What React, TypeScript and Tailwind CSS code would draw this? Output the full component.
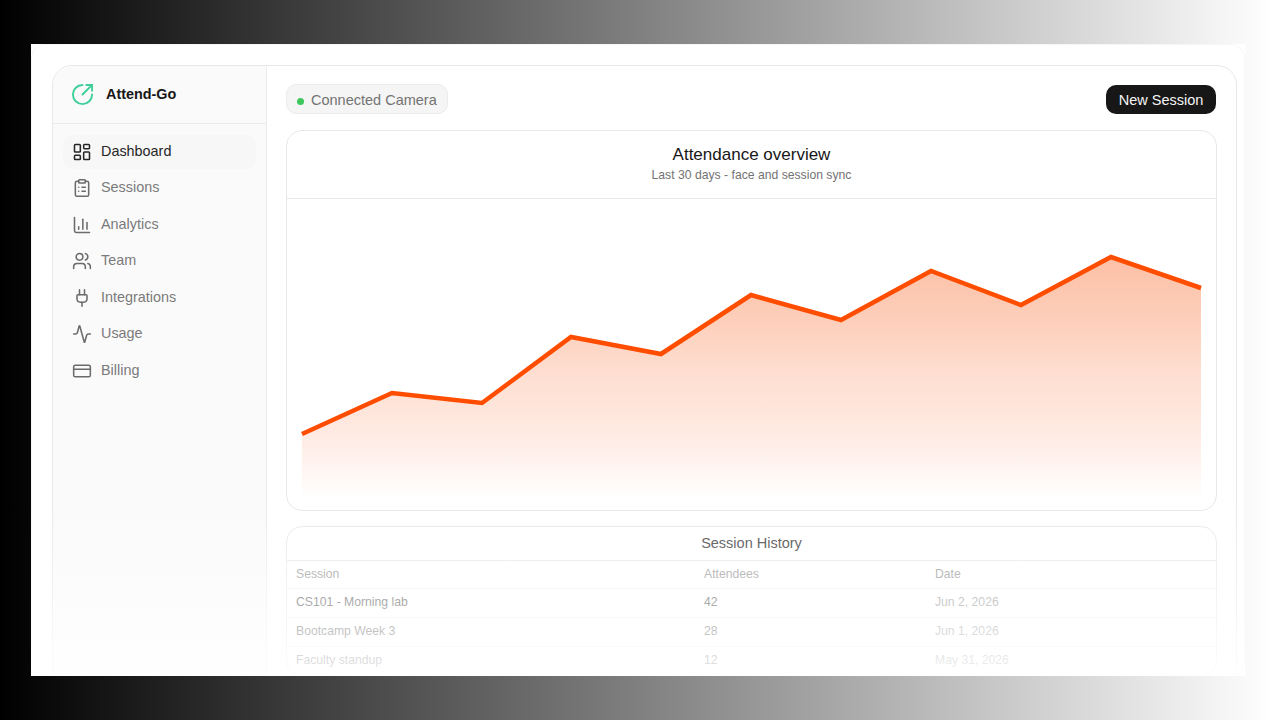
import { Activity, ChartColumn, CircleArrowOutUpRight, ClipboardList, CreditCard, LayoutDashboard, Plug, Users } from "lucide-react";

const nav = [
  { label: "Dashboard", Icon: LayoutDashboard, active: true },
  { label: "Sessions", Icon: ClipboardList },
  { label: "Analytics", Icon: ChartColumn },
  { label: "Team", Icon: Users },
  { label: "Integrations", Icon: Plug },
  { label: "Usage", Icon: Activity },
  { label: "Billing", Icon: CreditCard },
];

const rows = [
  ["CS101 - Morning lab", "42", "Jun 2, 2026"],
  ["Bootcamp Week 3", "28", "Jun 1, 2026"],
  ["Faculty standup", "12", "May 31, 2026"],
];

const pts: [number, number][] = [
  [15, 235], [105, 194], [195, 204], [284, 138], [374, 155], [464, 96],
  [554, 121], [644, 72], [734, 106], [824, 58], [914, 89],
];
const line = pts.map((p) => p.join(",")).join(" ");

export default function App() {
  return (
    <div className="h-[720px] w-[1274px] overflow-hidden bg-[linear-gradient(90deg,#000000_0%,#ffffff_100%)] py-[44px] font-['Liberation_Sans',Arial,sans-serif]">
      <div className="relative ml-[31px] h-[632px] w-[1214px] overflow-hidden bg-white px-[21px] pt-[21px]">
        <div className="flex h-[640px] w-[1185px] overflow-hidden rounded-[20px] border border-[#e8e8e8] bg-white">
          <aside className="w-[214px] shrink-0 border-r border-[#ececec] bg-[#fafafa]">
            <div className="flex h-[58px] items-center gap-[12px] border-b border-[#ececec] pl-[18px]">
              <CircleArrowOutUpRight className="h-[23px] w-[23px] text-[#3ecf9a]" strokeWidth={2} />
              <span className="pt-[1px] text-[14.4px] font-bold text-[#171717]">Attend-Go</span>
            </div>
            <nav className="flex flex-col gap-[2.5px] px-[10px] pt-[10.5px]">
              {nav.map(({ label, Icon, active }) => (
                <div
                  key={label}
                  className={`flex h-[34px] items-center gap-[9px] rounded-[10px] pl-[9px] text-[14.4px] ${active ? "bg-[#f7f7f7] text-[#262626]" : "text-[#7a7a7a]"}`}
                >
                  <Icon className={`h-[20px] w-[20px] ${active ? "text-[#262626]" : "text-[#6b6b6b]"}`} strokeWidth={1.85} />
                  {label}
                </div>
              ))}
            </nav>
          </aside>
          <main className="min-w-0 flex-1 px-[19px] pt-[18px]">
            <div className="flex h-[30px] items-center justify-between">
              <div className="flex h-[30px] items-center gap-[7px] rounded-[10px] border border-[#ececec] bg-[#f5f5f5] px-[10px] pt-[4px] text-[14.5px] text-[#737373]">
                <span className="h-[7px] w-[7px] rounded-full bg-[#3fc75f]" />
                Connected Camera
              </div>
              <button className="mr-[1px] mt-[1px] h-[29px] w-[110px] rounded-[10px] bg-[#171717] pt-[2px] text-[14.5px] text-[#f5f5f5]">New Session</button>
            </div>
            <section className="mt-[16px] h-[381px] rounded-[16px] border border-[#e8e8e8]">
              <div className="flex h-[68px] flex-col items-center border-b border-[#e8e8e8] pt-[14px]">
                <h2 className="text-[17px] leading-[20px] text-[#171717]">Attendance overview</h2>
                <p className="mt-[2px] text-[12.2px] leading-[16px] text-[#737373]">Last 30 days - face and session sync</p>
              </div>
              <svg width="929" height="311" viewBox="0 0 929 311" className="block">
                <defs>
                  <linearGradient id="area" x1="0" y1="58" x2="0" y2="298" gradientUnits="userSpaceOnUse">
                    <stop offset="0" stopColor="#fb9f78" stopOpacity="0.66" />
                    <stop offset="0.5" stopColor="#fb8f60" stopOpacity="0.28" />
                    <stop offset="1" stopColor="#ff5a1f" stopOpacity="0" />
                  </linearGradient>
                </defs>
                <polygon points={`15,298 ${line} 914,298`} fill="url(#area)" />
                <polyline points={line} fill="none" stroke="#ff4d00" strokeWidth="4.5" strokeLinejoin="miter" />
              </svg>
            </section>
            <section className="mt-[15px] rounded-[16px] border border-[#e8e8e8]">
              <div className="flex h-[34px] items-center justify-center border-b border-[#e8e8e8] text-[14.5px] text-[#404040]">Session History</div>
              <div className="grid h-[28px] grid-cols-[408px_231px_1fr] items-center border-b border-[#f0f0f0] pb-[1px] pl-[9px] text-[12.2px] text-[#939393]">
                <span>Session</span>
                <span>Attendees</span>
                <span>Date</span>
              </div>
              {rows.map((r) => (
                <div key={r[0]} className="grid h-[29px] grid-cols-[408px_231px_1fr] items-center border-b border-[#f0f0f0] pb-[1px] pl-[9px] text-[12.2px] text-[#525252]">
                  <span>{r[0]}</span>
                  <span>{r[1]}</span>
                  <span className="text-[#959595]">{r[2]}</span>
                </div>
              ))}
            </section>
          </main>
        </div>
        <div className="pointer-events-none absolute inset-0 rounded-[14px] border border-[#f6f6f6]" />
        <div className="pointer-events-none absolute inset-x-0 bottom-0 h-[176px] bg-[linear-gradient(180deg,rgba(255,255,255,0)_0%,rgba(255,255,255,0.88)_100%)]" />
      </div>
    </div>
  );
}
